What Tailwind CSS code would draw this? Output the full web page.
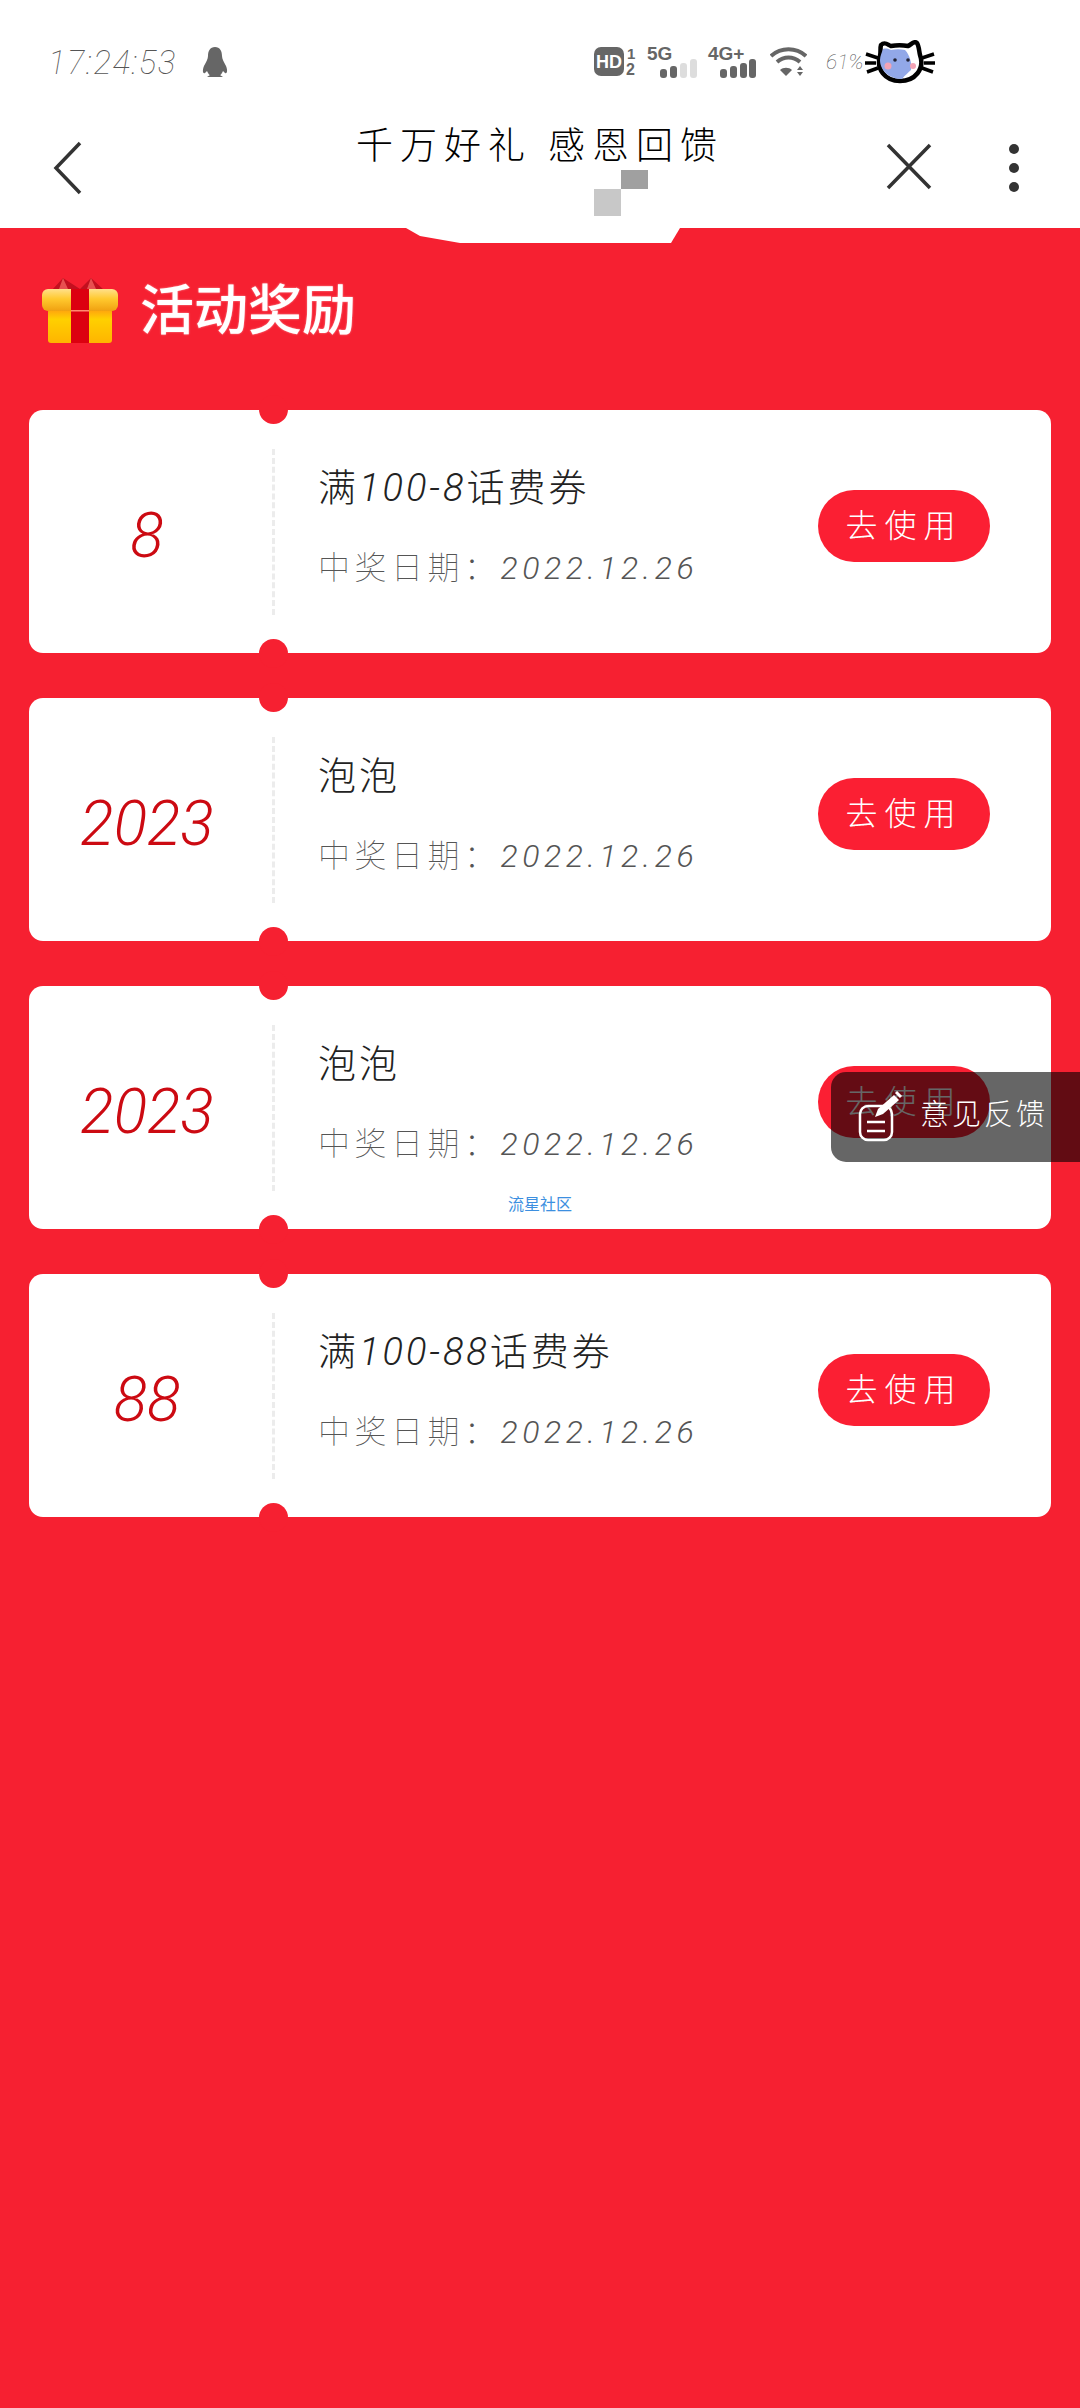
<!DOCTYPE html>
<html lang="zh">
<head>
<meta charset="utf-8">
<script src="https://cdn.jsdelivr.net/npm/@tailwindcss/browser@4"></script>
</head>
<body class="m-0">
<div class="relative w-[1080px] h-[2408px] overflow-hidden bg-[#f62031] font-['Roboto','Noto_Sans_CJK_SC',sans-serif] font-thin">

  <!-- header -->
  <header class="relative h-[228px] bg-white">
    <div class="flex items-center h-[124px] pl-[48px] pr-[145px]">
      <span class="italic text-[33px] leading-none tracking-[1.5px] text-[#555] w-[135px] whitespace-nowrap">17:24:53</span>
      <svg class="ml-[18px]" width="28" height="32" viewBox="0 0 28 32"><path d="M14 1c5 0 7 4 7 9 0 3 2 6 4 10 2 5 1 8-1 7l-2-2c-1 2-2 4-3 4l3 2H6l3-2c-1 0-2-2-3-4l-2 2c-2 1-3-2-1-7 2-4 4-7 4-10 0-5 2-9 7-9z" fill="#666"/></svg>
      <div class="flex-1"></div>
      <div class="flex items-center">
        <svg class="overflow-visible" width="46" height="32" viewBox="0 0 46 32">
          <rect x="0" y="1" width="30" height="29" rx="7" fill="#666"/>
          <text x="15" y="22" text-anchor="middle" font-family="Liberation Sans" font-weight="700" font-size="18" fill="#fff">HD</text>
          <text x="33" y="13" font-family="Liberation Sans" font-weight="700" font-size="15" fill="#666">1</text>
          <text x="32" y="29" font-family="Liberation Sans" font-weight="700" font-size="16" fill="#666">2</text>
        </svg>
        <svg class="ml-[7px] overflow-visible" width="52" height="34" viewBox="0 0 52 34">
          <text x="0" y="15" font-family="Liberation Sans" font-weight="700" font-size="19" fill="#666">5G</text>
          <rect x="13" y="24" width="7" height="9" rx="3" fill="#666"/>
          <rect x="23" y="21" width="7" height="12" rx="3" fill="#666"/>
          <rect x="33" y="18" width="7" height="15" rx="3" fill="#ddd"/>
          <rect x="43" y="14" width="7" height="19" rx="3" fill="#ddd"/>
        </svg>
        <svg class="ml-[9px] overflow-visible" width="50" height="34" viewBox="0 0 50 34">
          <text x="0" y="15" font-family="Liberation Sans" font-weight="700" font-size="19" fill="#666">4G+</text>
          <rect x="12" y="24" width="7" height="9" rx="3" fill="#666"/>
          <rect x="22" y="21" width="7" height="12" rx="3" fill="#666"/>
          <rect x="32" y="18" width="7" height="15" rx="3" fill="#666"/>
          <rect x="41" y="14" width="7" height="19" rx="3" fill="#666"/>
        </svg>
        <svg class="ml-[12px]" width="37" height="30" viewBox="0 0 37 30" fill="none" stroke="#666" stroke-width="4">
          <path d="M1 9c10-9 25-9 35 0"/><path d="M7 15c7-6 16-6 23 0"/>
          <path d="M11 23l6 6 6-6c-3-3-9-3-12 0z" fill="#666" stroke="none" transform="translate(-1 0)"/>
          <path d="M30 19l-3 4h6zM30 29l-3-4h6z" fill="#666" stroke="none"/>
        </svg>
        <span class="ml-[19px] italic text-[21px] leading-none text-[#555] w-[28px] whitespace-nowrap">61%</span>
        <svg class="ml-[11px]" width="70" height="44" viewBox="0 0 70 44">
          <path d="M1 14l12 4M0 23l11 0M2 32l11-4M69 14l-12 4M70 23l-11 0M68 32l-11-4" stroke="#000" stroke-width="3.5" fill="none"/>
          <path d="M16 5c4-4 7 0 10 1 5-1 12-1 17 0 3-1 6-6 9-3 2 3 2 8 3 12 5 14-5 26-20 26S11 29 15 16c1-4 0-8 1-11z" fill="#fff" stroke="#000" stroke-width="4.5"/>
          <path d="M18 9c3-1 6 0 8 1 5-1 9-1 14 0 5 5 7 14 6 20-3 3-6 5-9 9-12 0-22-8-22-19 0-4 2-8 3-11z" fill="#92a8e8"/>
          <circle cx="30" cy="20" r="1.8" fill="#223"/><circle cx="43" cy="20" r="1.8" fill="#223"/>
          <circle cx="23" cy="26" r="3.5" fill="#f3a3b5"/><circle cx="48" cy="26" r="3" fill="#f3a3b5"/>
        </svg>
      </div>
    </div>
    <nav class="relative h-[74px] flex items-start justify-between">
      <svg class="ml-[52px] mt-[17px]" width="32" height="54" viewBox="0 0 32 54" fill="none" stroke="#333" stroke-width="3.5"><path d="M28 2 4 27l24 25"/></svg>
      <h1 class="absolute left-0 right-0 top-0 text-center text-[37px] leading-[46px] tracking-[7px] text-black font-light">千万好礼 感恩回馈</h1>
      <div class="flex items-start mr-[61px] mt-[18px]">
        <svg width="48" height="48" viewBox="0 0 48 48" fill="none" stroke="#333" stroke-width="3.5"><path d="M3 3l42 43M45 3 3 46"/></svg>
        <div class="ml-[76px] flex flex-col gap-[9px] mt-[2px]">
          <span class="block w-[10px] h-[10px] rounded-full bg-[#333]"></span>
          <span class="block w-[10px] h-[10px] rounded-full bg-[#333]"></span>
          <span class="block w-[10px] h-[10px] rounded-full bg-[#333]"></span>
        </div>
      </div>
    </nav>
    <!-- loading blocks -->
    <span class="absolute left-[621px] top-[170px] w-[27px] h-[19px] bg-[#a0a0a0]"></span>
    <span class="absolute left-[594px] top-[189px] w-[27px] h-[27px] bg-[#c8c8c8]"></span>
    <svg class="absolute left-[400px] top-[228px]" width="290" height="16" viewBox="0 0 290 16"><path d="M6 0 20 8l40 7h211l9-15z" fill="#fff"/></svg>
  </header>

  <!-- heading -->
  <div class="flex items-start h-[182px] pl-[41px] pt-[49px]">
    <svg width="78" height="70" viewBox="0 0 78 70">
      <defs>
        <linearGradient id="lid" x1="0" y1="0" x2="0" y2="1"><stop offset="0" stop-color="#ffe08a"/><stop offset="0.45" stop-color="#ffc92e"/><stop offset="1" stop-color="#f0a010"/></linearGradient>
        <linearGradient id="box" x1="0" y1="0" x2="0" y2="1"><stop offset="0" stop-color="#ff9f10"/><stop offset="0.3" stop-color="#ffd000"/><stop offset="1" stop-color="#ffb400"/></linearGradient>
      </defs>
      <path d="M11 13 22 1l17 11L50 1l13 12z" fill="#c3101f"/>
      <path d="M22 1l5 11h-9zM50 1l5 11h-9z" fill="#e85050"/>
      <rect x="7" y="32" width="64" height="34" rx="3" fill="url(#box)"/>
      <rect x="1" y="12" width="76" height="22" rx="6" fill="url(#lid)"/>
      <rect x="30" y="12" width="18" height="54" fill="#dc0010"/>
      <rect x="30" y="33" width="18" height="1.5" fill="#ff8a70"/>
    </svg>
    <h2 class="ml-[21px] -mt-[1px] text-[54px] leading-[72px] font-medium text-white whitespace-nowrap [text-shadow:0_0_2px_rgba(255,255,255,0.6)]">活动奖励</h2>
  </div>

  <!-- cards -->
  <main class="flex flex-col gap-[45px] px-[29px]">

    <article class="relative h-[243px] bg-white rounded-[14px] flex items-center">
      <span class="absolute left-[230px] -top-[15px] w-[29px] h-[29px] rounded-full bg-[#f62031]"></span>
      <span class="absolute left-[230px] -bottom-[15px] w-[29px] h-[29px] rounded-full bg-[#f62031]"></span>
      <div class="w-[236px] mr-[7px] text-center text-[#cc0a12] italic font-light text-[62px] leading-none mt-[8px]">8</div>
      <div class="w-0 h-[166px] mt-[1px] border-l-[3px] border-dashed border-[#ececec]"></div>
      <div class="ml-[43px] flex-1 -mt-[8px]">
        <p class="text-[38px] leading-[46px] tracking-[3px] text-[#222] font-light whitespace-nowrap">满<span class="italic">100-8</span>话费券</p>
        <p class="mt-[34px] text-[32px] leading-[46px] tracking-[4.5px] text-[#555] whitespace-nowrap">中奖日期：<span class="italic font-light">2022.12.26</span></p>
      </div>
      <button class="mr-[61px] -mt-[12px] w-[172px] h-[72px] rounded-full bg-[#fb1f33] text-white text-[32px] tracking-[7px] font-light">去使用</button>
    </article>

    <article class="relative h-[243px] bg-white rounded-[14px] flex items-center">
      <span class="absolute left-[230px] -top-[15px] w-[29px] h-[29px] rounded-full bg-[#f62031]"></span>
      <span class="absolute left-[230px] -bottom-[15px] w-[29px] h-[29px] rounded-full bg-[#f62031]"></span>
      <div class="w-[236px] mr-[7px] text-center text-[#cc0a12] italic font-light text-[62px] leading-none mt-[8px]">2023</div>
      <div class="w-0 h-[166px] mt-[1px] border-l-[3px] border-dashed border-[#ececec]"></div>
      <div class="ml-[43px] flex-1 -mt-[8px]">
        <p class="text-[38px] leading-[46px] tracking-[3px] text-[#222] font-light whitespace-nowrap">泡泡</p>
        <p class="mt-[34px] text-[32px] leading-[46px] tracking-[4.5px] text-[#555] whitespace-nowrap">中奖日期：<span class="italic font-light">2022.12.26</span></p>
      </div>
      <button class="mr-[61px] -mt-[12px] w-[172px] h-[72px] rounded-full bg-[#fb1f33] text-white text-[32px] tracking-[7px] font-light">去使用</button>
    </article>

    <article class="relative h-[243px] bg-white rounded-[14px] flex items-center">
      <span class="absolute left-[230px] -top-[15px] w-[29px] h-[29px] rounded-full bg-[#f62031]"></span>
      <span class="absolute left-[230px] -bottom-[15px] w-[29px] h-[29px] rounded-full bg-[#f62031]"></span>
      <div class="w-[236px] mr-[7px] text-center text-[#cc0a12] italic font-light text-[62px] leading-none mt-[8px]">2023</div>
      <div class="w-0 h-[166px] mt-[1px] border-l-[3px] border-dashed border-[#ececec]"></div>
      <div class="ml-[43px] flex-1 -mt-[8px]">
        <p class="text-[38px] leading-[46px] tracking-[3px] text-[#222] font-light whitespace-nowrap">泡泡</p>
        <p class="mt-[34px] text-[32px] leading-[46px] tracking-[4.5px] text-[#555] whitespace-nowrap">中奖日期：<span class="italic font-light">2022.12.26</span></p>
      </div>
      <button class="mr-[61px] -mt-[12px] w-[172px] h-[72px] rounded-full bg-[#fb1f33] text-white text-[32px] tracking-[7px] font-light">去使用</button>
      <span class="absolute left-[479px] top-[209px] text-[16px] leading-[20px] text-[#3c8fe0] font-normal whitespace-nowrap">流星社区</span>
    </article>

    <article class="relative h-[243px] bg-white rounded-[14px] flex items-center">
      <span class="absolute left-[230px] -top-[15px] w-[29px] h-[29px] rounded-full bg-[#f62031]"></span>
      <span class="absolute left-[230px] -bottom-[15px] w-[29px] h-[29px] rounded-full bg-[#f62031]"></span>
      <div class="w-[236px] mr-[7px] text-center text-[#cc0a12] italic font-light text-[62px] leading-none mt-[8px]">88</div>
      <div class="w-0 h-[166px] mt-[1px] border-l-[3px] border-dashed border-[#ececec]"></div>
      <div class="ml-[43px] flex-1 -mt-[8px]">
        <p class="text-[38px] leading-[46px] tracking-[3px] text-[#222] font-light whitespace-nowrap">满<span class="italic">100-88</span>话费券</p>
        <p class="mt-[34px] text-[32px] leading-[46px] tracking-[4.5px] text-[#555] whitespace-nowrap">中奖日期：<span class="italic font-light">2022.12.26</span></p>
      </div>
      <button class="mr-[61px] -mt-[12px] w-[172px] h-[72px] rounded-full bg-[#fb1f33] text-white text-[32px] tracking-[7px] font-light">去使用</button>
    </article>
  </main>

  <!-- floating feedback -->
  <aside class="absolute left-[831px] top-[1072px] w-[249px] h-[90px] rounded-l-[15px] bg-black/60 flex items-start">
    <svg class="ml-[26px] mt-[18px]" width="46" height="52" viewBox="0 0 46 52" fill="none">
      <rect x="3" y="16" width="32" height="34" rx="8" stroke="#fff" stroke-width="2.5"/>
      <path d="M10 32h18M10 41h18" stroke="#fff" stroke-width="2.5"/>
      <path d="M18 27l3-8L37 5l5 5L26 24z" fill="#fff"/>
      <path d="M39 2l5 5" stroke="#fff" stroke-width="3"/>
    </svg>
    <span class="ml-[17px] mt-[25px] text-[29px] leading-[36px] tracking-[3px] text-white font-light whitespace-nowrap">意见反馈</span>
  </aside>
</div>
</body>
</html>
